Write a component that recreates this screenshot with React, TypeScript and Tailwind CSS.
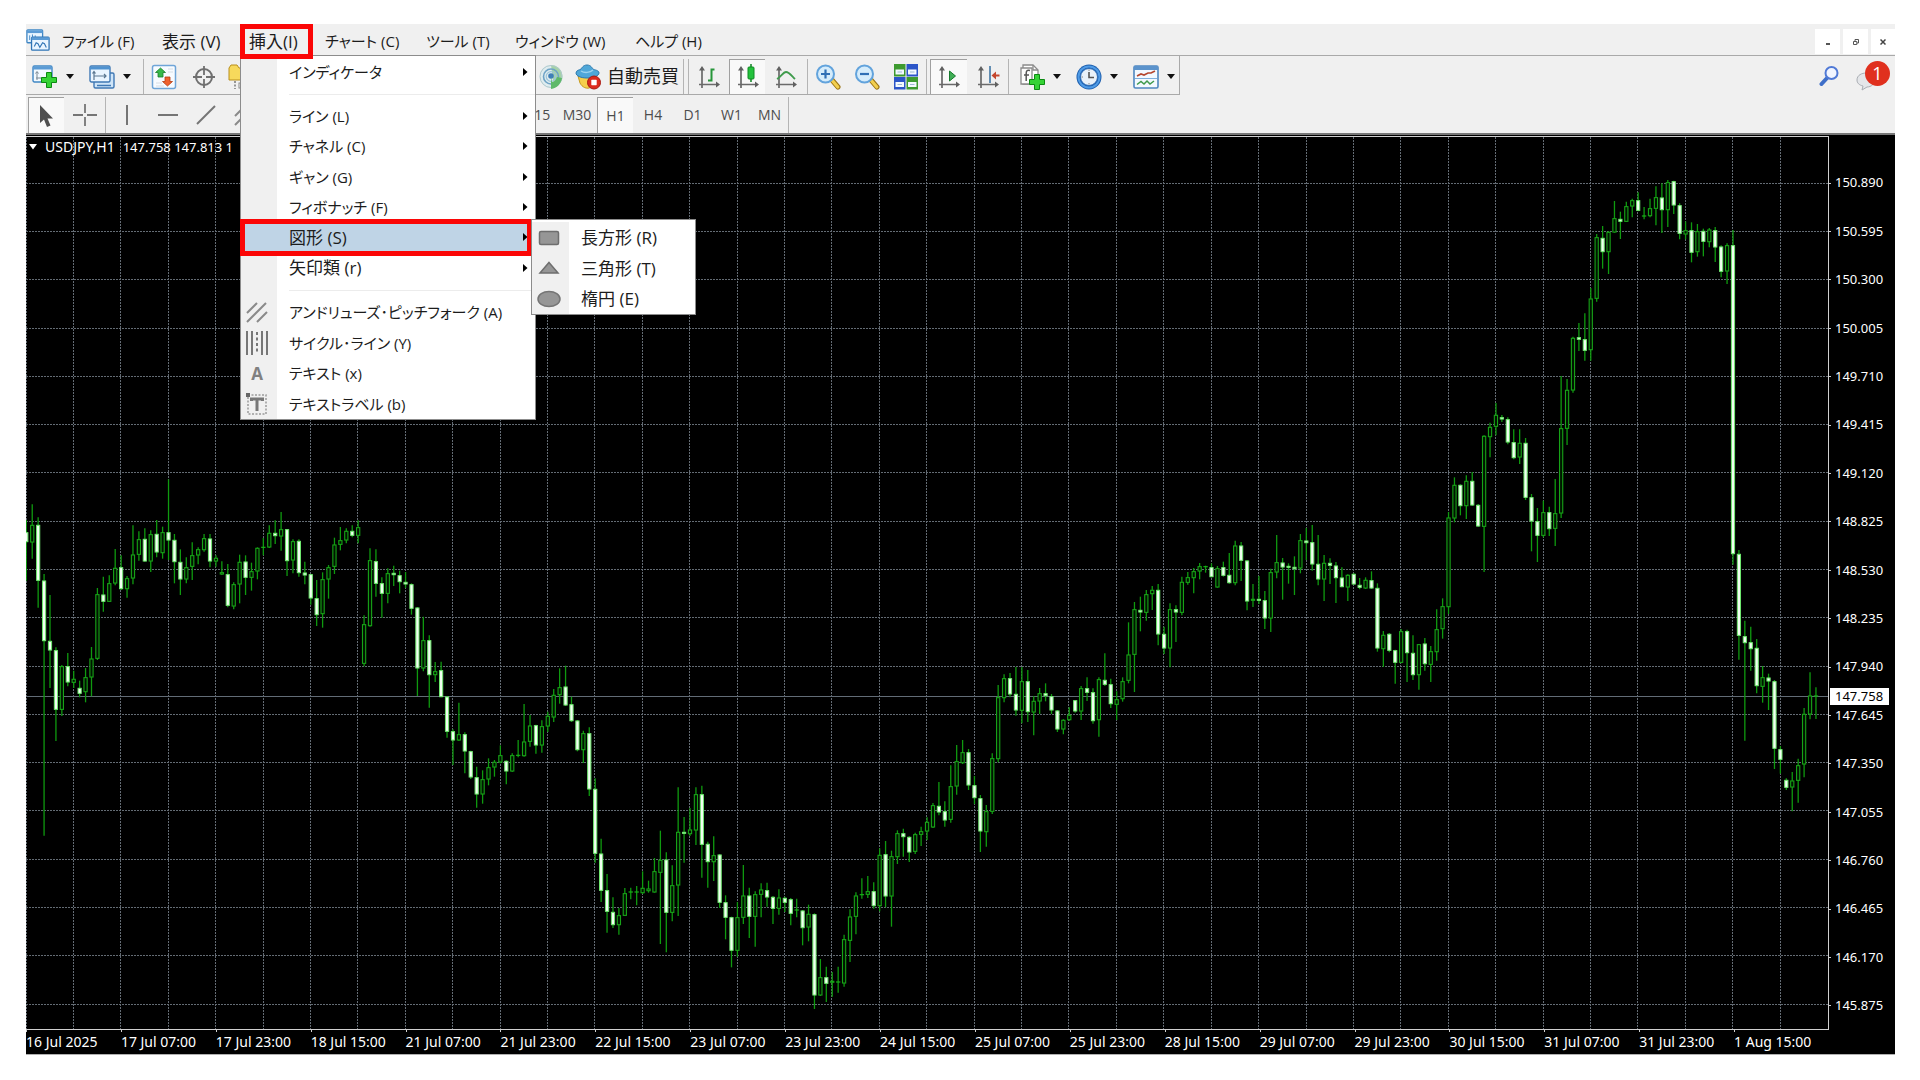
import type { ReactNode } from "react";

/* ---------- chart data ---------- */

// Each bar: direction (u = up, d = down, x = doji), high, body top, body bottom, low.
// Values are thirds of a unit, measured downwards from the base of the session.
const SESSIONS: { base: number; bars: string }[] = [
  {
    base: 460,
    bars: `d 180 217 246 362|u 133 195 247 296|d 172 195 362 443|d 342 362 543 1127|d 405 543 571 684|d 562 571 749 843|u 615 619 749 768|d 579 619 667 679|u 632 657 668 684|d 662 684 701 712|u 624 652 696 727|u 561 596 652 709|u 384 403 596 600|d 350 404 425 455|u 346 370 425 425|u 267 324 370 376|d 286 322 387 390|u 348 355 387 413|u 196 284 355 373|u 214 238 284 302|d 205 237 304 306|u 211 223 304 336|d 180 222 277 292|u 200 217 279 296|d 58 217 241 300|d 222 240 306 370|d 268 306 358 405|u 292 322 358 370|u 247 286 320 360|u 262 268 286 313|u 222 235 270 275|d 222 236 304 322|u 286 294 304 320|u 304 337 343 345|d 312 343 437 442|u 367 373 439 448|u 284 306 373 430|d 286 305 353 405|u 308 334 353 392|u 262 264 334 358|x 234 262 264 286|u 196 219 262 264|d 181 219 228 252|u 156 208 229 272|d 208 208 303 348|u 238 244 301 340|d 238 243 339 350|d 305 338 346 373|d 343 343 415 434|d 360 415 465 498|u 337 358 462 503|u 315 322 358 416|u 233 254 320 342|u 201 241 254 271|u 205 213 241 250|d 196 213 227 232|u 181 202 227 250|u 466 493 611 619|u 265 301 498 500|d 268 304 371 410|d 352 370 401 473|u 325 340 401 430|d 317 339 345 378|d 332 346 366 400|d 336 366 373 384|d 370 373 446 464|d 441 443 625 708`,
  },
  {
    base: 560,
    bars: `u 170 241 325 334|d 226 241 345 443|u 306 334 345 366|d 305 331 411 412|d 408 410 515 533|d 508 514 541 615|u 428 523 541 543|d 517 523 574 640|d 572 574 652 657|d 620 652 703 743|u 631 658 703 731|u 595 622 658 676|u 600 606 622 650|u 556 586 607 610|d 601 603 634 673|u 580 586 634 636|x 540 586 588 592|u 432 545 588 590|u 465 497 545 560|d 494 496 556 581|u 481 499 556 578|u 455 468 499 516|u 387 405 472 486|u 325 382 405 431|d 317 380 436 438|d 410 433 483 486|d 480 482 570 574|u 512 520 570 609|d 502 520 688 708|d 655 687 881 908|d 836 881 992 1026|d 942 991 1055 1118|d 1012 1056 1095 1104|u 1044 1066 1095 1124|u 984 1000 1067 1068|x 983 996 998 1018|x 978 996 998 1036|u 934 984 999 1002|u 962 986 993 998|u 894 934 997 998|u 812 900 938 1152|d 877 899 1058 1177|u 916 976 1058 1084|u 682 816 976 1068|d 771 816 821 908|u 744 809 822 828|u 682 703 811 855|d 677 703 854 953|d 845 852 906 983|u 829 886 906 963|d 882 884 1028 1044|d 1006 1027 1073 1138|d 1070 1072 1172 1222|u 1026 1072 1172 1190|u 915 1007 1073 1092|d 983 1007 1070 1134|u 994 1003 1070 1160|u 970 989 1004 1072|d 968 991 1012 1040|d 1008 1011 1046 1092|u 988 1013 1046 1064|d 1010 1014 1028 1056|d 1014 1018 1061 1096|x 1016 1050 1052 1072|d 1050 1052 1104 1156|u 1034 1062 1102 1144|d 1060 1063 1306 1347`,
  },
  {
    base: 520,
    bars: `u 1317 1372 1426 1428|d 1340 1372 1391 1446|u 1356 1383 1387 1430|x 1340 1386 1388 1418|u 1244 1258 1390 1400|u 1168 1190 1262 1326|u 1117 1127 1190 1243|x 1075 1124 1126 1136|u 1068 1114 1124 1134|d 1087 1114 1158 1166|u 985 1005 1158 1174|d 963 1003 1129 1162|u 992 1009 1129 1220|u 931 940 1011 1032|d 926 940 951 1010|d 949 951 997 1026|u 938 943 995 1002|u 920 934 944 978|u 892 906 934 960|u 849 856 922 924|d 786 858 877 886|d 844 874 901 920|u 736 799 899 908|u 675 724 799 824|u 660 697 729 732|d 687 697 796 810|d 768 796 834 852|d 825 835 934 996|u 855 874 936 980|u 700 715 875 882|u 495 532 717 727|u 463 475 534 547|d 459 475 523 532|d 441 522 571 587|u 441 484 572 610|d 450 484 576 606|u 528 543 577 646|u 504 520 544 582|d 490 520 528 544|d 522 529 571 582|d 570 572 628 636|u 598 600 628 643|u 562 585 600 602|d 540 541 574 578|u 498 505 574 600|d 472 505 518 543|d 505 517 603 611|u 472 478 600 650|d 400 480 494 498|d 476 493 552 564|u 514 538 554 600|u 472 484 537 545|u 307 404 482 490|u 246 268 404 516|d 230 270 277 334|u 210 223 278 302|u 198 210 222 270|d 192 210 343 376|d 320 342 385 402|u 250 268 385 442|d 256 268 277 366|u 170 186 278 286|u 156 172 188 194`,
  },
  {
    base: 400,
    bars: `u 504 514 534 580|u 489 499 514 538|x 497 500 503 518|d 490 502 531 532|u 498 505 562 563|d 485 502 527 530|d 459 525 549 551|u 422 437 549 556|d 426 437 482 543|d 480 482 604 631|u 552 597 602 621|d 528 597 602 612|d 573 601 655 687|u 506 517 655 696|u 405 487 517 535|d 474 488 502 599|d 490 498 503 551|d 469 501 507 585|u 402 421 505 520|d 384 422 429 480|d 375 427 493 512|d 405 492 538 556|u 465 489 538 603|d 475 489 497 552|d 486 497 534 609|d 502 533 561 562|u 523 525 562 603|d 520 522 553 555|d 534 555 563 568|u 532 540 565 567|d 514 541 565 567|d 550 564 745 755|u 693 705 747 801|d 699 702 752 757|d 749 751 788 851|u 687 694 788 790|d 689 694 759 846|d 706 759 825 840|u 732 733 825 869|d 714 731 792 812|u 738 754 794 846|u 628 688 756 782|u 595 619 687 716|u 336 353 621 642|u 232 255 355 367|d 253 255 318 346|u 226 243 318 357|d 216 243 316 318|d 312 315 379 381|u 106 108 380 516|u 68 81 111 172|u 9 45 80 106|d 45 52 58 66|d 52 58 127 133|d 88 127 174 178|u 88 129 172 192|d 114 129 293 300|d 282 292 364 454|d 324 364 407 486|u 302 337 407 412|d 320 337 387 408|u 237 340 386 438`,
  },
  {
    base: 160,
    bars: `u 648 805 1060 1074|u 657 690 806 855|u 530 534 691 698|d 489 532 539 573|d 460 538 572 602|u 384 416 570 602|u 222 232 416 425|d 198 234 276 326|u 214 216 276 342|u 123 175 217 218|d 155 177 185 237|u 125 139 185 186|u 116 121 139 172|d 97 121 152 154|x 141 168 170 178|u 116 145 168 172|u 79 112 146 196|d 70 113 150 219|u 60 67 150 201|d 62 64 136 162|d 130 136 221 238|u 184 211 223 238|d 187 211 278 307|u 192 214 276 290|d 206 213 245 289|u 204 209 246 262|d 201 211 262 306|d 256 260 335 352|u 250 256 334 372|d 210 256 1182 1214|d 1170 1182 1427 1499`,
  },
  {
    base: 600,
    bars: `d 62 109 129 422|d 80 127 147 212|d 117 144 258 280|u 198 232 260 308|d 221 233 244 330|d 240 244 446 507|d 438 448 479 521|d 535 540 563 570|u 516 542 562 634|u 476 496 542 608|u 324 342 493 532|u 217 287 343 358|x 262 288 290 357`,
  },
];

const BAR_STEP = 5.926;
const BARS = SESSIONS.flatMap((s) =>
  s.bars.split("|").map((line) => {
    const [kind, ...v] = line.split(" ");
    const [high, top, bottom, low] = v.map((n) => s.base + Number(n) / 3);
    return { kind, high, top, bottom, low };
  }),
).map((b, i) => ({ ...b, x: 26.3 + BAR_STEP * i }));

const GRID_X = Array.from({ length: 38 }, (_, i) => 26 + BAR_STEP * 8 * i);
const GRID_Y = Array.from({ length: 18 }, (_, i) => 183.2 + 48.29 * i);

const PRICES = [
  "150.890", "150.595", "150.300", "150.005", "149.710", "149.415", "149.120", "148.825", "148.530",
  "148.235", "147.940", "147.645", "147.350", "147.055", "146.760", "146.465", "146.170", "145.875",
];

const DATES = [
  "16 Jul 2025", "17 Jul 07:00", "17 Jul 23:00", "18 Jul 15:00", "21 Jul 07:00", "21 Jul 23:00", "22 Jul 15:00",
  "23 Jul 07:00", "23 Jul 23:00", "24 Jul 15:00", "25 Jul 07:00", "25 Jul 23:00", "28 Jul 15:00", "29 Jul 07:00",
  "29 Jul 23:00", "30 Jul 15:00", "31 Jul 07:00", "31 Jul 23:00", "1 Aug 15:00",
];

function CandleChart() {
  return (
    <svg className="block h-full w-full" viewBox="26 137 1802 892" preserveAspectRatio="none" role="img" aria-label="USDJPY,H1">
      <g stroke="#646c74" strokeWidth="1" strokeDasharray="2 1">
        {GRID_X.map((x) => (
          <line key={x} x1={Math.floor(x) + 0.5} x2={Math.floor(x) + 0.5} y1="137" y2="1029" />
        ))}
        {GRID_Y.map((y) => (
          <line key={y} x1="26" x2="1828" y1={Math.floor(y) + 0.5} y2={Math.floor(y) + 0.5} />
        ))}
      </g>
      <line x1="26" x2="1828" y1="696.5" y2="696.5" stroke="#626c76" />
      {BARS.map((b, i) => (
        <g key={i}>
          <line x1={b.x} x2={b.x} y1={b.high} y2={b.low} stroke="#0f9a0f" strokeWidth="1.3" />
          {b.kind === "x" ? (
            <line x1={b.x - 2.2} x2={b.x + 2.2} y1={b.top} y2={b.top} stroke="#16b016" strokeWidth="1.2" />
          ) : b.kind === "u" ? (
            <rect x={b.x - 1.6} y={b.top + 0.3} width="3.2" height={Math.max(1, b.bottom - b.top - 0.6)} fill="#001500" stroke="#17a317" strokeWidth="1.1" />
          ) : (
            <rect x={b.x - 1.6} y={b.top + 0.3} width="3.2" height={Math.max(1, b.bottom - b.top - 0.6)} fill="#f2fff2" stroke="#6fe86f" strokeWidth="1" />
          )}
        </g>
      ))}
    </svg>
  );
}

/* ---------- icons ---------- */

function Icon({ children, className = "h-[26px] w-[26px]" }: { children: ReactNode; className?: string }) {
  return (
    <svg className={`${className} shrink-0`} viewBox="0 0 26 26" fill="none" aria-hidden="true">
      {children}
    </svg>
  );
}

const Plus = ({ x, y }: { x: number; y: number }) => (
  <path
    transform={`translate(${x} ${y})`}
    d="M5 0h5v5h5v5h-5v5H5v-5H0V5h5z"
    fill="#35d335"
    stroke="#0c8a12"
    strokeWidth="1"
  />
);

const LogoIcon = () => (
  <Icon className="h-6 w-6">
    <rect x="1" y="2" width="17" height="14" rx="1" fill="#e9f5ff" stroke="#3f86c4" strokeWidth="1.4" />
    <path d="M1 4h17" stroke="#5b9bd5" strokeWidth="3" />
    <path d="M4 8v5M7 7v4M10 8v3" stroke="#3f86c4" />
    <rect x="6" y="10" width="19" height="14" rx="1" fill="#e9f5ff" stroke="#2f74b5" strokeWidth="1.4" />
    <path d="M6 11.5h19" stroke="#5b9bd5" strokeWidth="3" />
    <path d="M9 20l2-4 2 1 2 4 3-5 2 1 2 4" stroke="#2f74b5" strokeWidth="1.2" />
  </Icon>
);

const NewChartIcon = () => (
  <Icon>
    <rect x="1" y="2" width="19" height="16" rx="1.5" fill="#f2f9ff" stroke="#3f86c4" strokeWidth="1.4" />
    <path d="M1 4h19" stroke="#5b9bd5" strokeWidth="3" />
    <path d="M5 8v8M3.5 9.5L5 7.5l1.5 2M4 14h9" stroke="#7b8894" />
    <Plus x={9.5} y={8.5} />
  </Icon>
);

const ProfilesIcon = () => (
  <Icon>
    <rect x="5" y="9" width="20" height="15" rx="1.5" fill="#cfe5f8" stroke="#3f78b4" strokeWidth="1.4" />
    <path d="M8 21.5h14" stroke="#3f78b4" strokeWidth="1.5" />
    <rect x="1" y="2" width="20" height="16" rx="1.5" fill="#eaf5ff" stroke="#3f78b4" strokeWidth="1.4" />
    <path d="M1 4h20" stroke="#4f92d0" strokeWidth="3" />
    <path d="M5 8v8M3.5 9.5L5 7.5l1.5 2M5 12h12M15 10l2 2-2 2" stroke="#5a7690" strokeWidth="1.2" />
  </Icon>
);

const MarketWatchIcon = () => (
  <Icon>
    <rect x="1.5" y="1.5" width="23" height="23" rx="2" fill="#f7fbff" stroke="#6fa5d8" strokeWidth="1.5" />
    <path d="M5 19h6M5 22h8M17 5h5M17 8h5" stroke="#d6dde5" />
    <path d="M9.500 4l5 4.500h-2.500v4.500H7V8.500H4.500z" fill="#37b84a" stroke="#1b7e2b" strokeWidth=".8" />
    <path d="M16.500 22l5-4.500H19V13h-5v4.500h-2.500z" fill="#f0612e" stroke="#b53c12" strokeWidth=".8" />
  </Icon>
);

const TargetIcon = () => (
  <Icon>
    <circle cx="13" cy="13" r="8" stroke="#6f6f6f" strokeWidth="2" />
    <path d="M13 2v9M13 15v9M2 13h9M15 13h9" stroke="#6f6f6f" strokeWidth="1.8" />
  </Icon>
);

const NavigatorIcon = () => (
  <Icon>
    <path d="M1 4l2-3h6l2 3h12v12H1z" fill="#f7d95c" stroke="#b98f1c" />
    <path d="M7 17v8" stroke="#777" strokeDasharray="2 1.5" strokeWidth="1.5" />
    <rect x="11" y="19" width="8" height="5" fill="#fff" stroke="#888" />
  </Icon>
);

const SignalIcon = () => (
  <Icon>
    <circle cx="13" cy="12.5" r="11.500" fill="#dfecef" />
    <path d="M13 1a11.500 11.500 0 0 1 3 22.600z" fill="#a5d3a8" />
    <circle cx="13" cy="12.5" r="11" stroke="#b0c8cc" />
    <circle cx="13" cy="12.5" r="7.500" stroke="#6ea3c6" strokeWidth="1.6" />
    <circle cx="13" cy="12.5" r="4.800" stroke="#9cc4da" strokeWidth="1.2" />
    <circle cx="13" cy="12" r="2.800" fill="#3f7fb8" />
    <path d="M13 13v12c6-1 10-5 11-11l-5-1c-1 3-3 5-5 5z" fill="#5fb96a" />
  </Icon>
);

const AutoTradeIcon = () => (
  <Icon>
    <path d="M3 12l18-2-5 13c-4 3-9 0-11-4z" fill="#f6cf4b" stroke="#c79a1e" />
    <path d="M1 9c0-3 4-3 5-4s2-4 6-4 5 3 6 4 6 1 6 4-6 5-12 5S1 12 1 9z" fill="#4fa7d8" stroke="#2d79ad" />
    <path d="M6 7c3 2 9 2 12-1" stroke="#9cd3ee" strokeWidth="1.5" />
    <circle cx="19" cy="18.5" r="6.5" fill="#dd2a1d" stroke="#a81910" />
    <rect x="16.3" y="15.8" width="5.4" height="5.4" rx=".6" fill="#fff" />
  </Icon>
);

const Axes = () => (
  <>
    <path d="M6 4v20M3 20.500h19" stroke="#6a6a6a" strokeWidth="1.700" />
    <path d="M3 6.500L6 2l3 4.500zM20 17.500l4 3-4 3z" fill="#606060" />
  </>
);

const BarChartIcon = () => (
  <Icon>
    <Axes />
    <path d="M15.5 4.500v13M15 5.500h3.500M12 16.500h3.500" stroke="#27963a" strokeWidth="2" />
  </Icon>
);

const CandleIcon = () => (
  <Icon>
    <Axes />
    <path d="M16 0v18" stroke="#1b8a2d" strokeWidth="1.600" />
    <rect x="13" y="3" width="6" height="12" rx="1" fill="#23c23c" stroke="#0f8a22" />
  </Icon>
);

const LineChartIcon = () => (
  <Icon>
    <Axes />
    <path d="M4 15c4-2 6-7 9-7s5 3 9 7" stroke="#3f9b4c" strokeWidth="1.800" />
  </Icon>
);

const Magnifier = ({ plus }: { plus?: boolean }) => (
  <Icon>
    <path d="M17 16l6 7" stroke="#9b7414" strokeWidth="5" strokeLinecap="round" />
    <path d="M17.3 16.500l5.500 6.500" stroke="#f2cf4f" strokeWidth="3.200" strokeLinecap="round" />
    <circle cx="10.500" cy="10" r="8.500" fill="#d5ecfb" stroke="#62a3dc" strokeWidth="2" />
    <path d={plus ? "M6 10h9M10.5 5.500v9" : "M6 10h9"} stroke="#2f6fb5" strokeWidth="2.200" />
  </Icon>
);

const TileIcon = () => (
  <Icon>
    <rect x="1" y="0" width="11.500" height="12.500" fill="#3d9a2f" />
    <rect x="13.500" y="0" width="11.500" height="12.500" fill="#2b55c8" />
    <rect x="1" y="13" width="11.500" height="12.500" fill="#2b55c8" />
    <rect x="13.500" y="13" width="11.500" height="12.500" fill="#3d9a2f" />
    <path d="M2.500 5.500H11v5H2.500zM15 5.500h8.500v5H15zM2.500 18H11v5H2.500zM15 18h8.500v5H15z" fill="#f4faff" />
    <path d="M4.500 8H9M17 8h4.500M4.500 20.500H9M17 20.500h4.500" stroke="#9fb8d4" />
  </Icon>
);

const AutoScrollIcon = () => (
  <Icon>
    <Axes />
    <path d="M13.500 7l6 5-6 5z" fill="#3fae55" stroke="#167a2d" />
  </Icon>
);

const ShiftIcon = () => (
  <Icon>
    <Axes />
    <path d="M15 2v17" stroke="#4a7da8" strokeWidth="1.700" />
    <path d="M24.500 11.500h-6" stroke="#c4462e" strokeWidth="2" />
    <path d="M21 7.500L16.500 11.500l4.500 4z" fill="#c4462e" />
  </Icon>
);

const IndicatorsIcon = () => (
  <Icon>
    <path d="M4 1h10l5 5v14H4z" fill="#fff" stroke="#8a8a8a" strokeWidth="1.300" />
    <path d="M2 4h11v16H2z" fill="#fcfcfc" stroke="#8a8a8a" strokeWidth="1.300" />
    <path d="M14 1v5h5" stroke="#8a8a8a" strokeWidth="1.300" />
    <path d="M11 6.500c-3-1-3.800.5-3.800 3V17M5 11h5" stroke="#555" strokeWidth="1.500" />
    <Plus x={10.500} y={10.500} />
  </Icon>
);

const ClockIcon = () => (
  <Icon>
    <circle cx="13" cy="13" r="12.500" fill="#1d5fae" />
    <circle cx="13" cy="13" r="10.500" stroke="#4f9be6" strokeWidth="2" />
    <circle cx="13" cy="13" r="8.500" fill="#e9f1f9" stroke="#2c6cb8" />
    <path d="M13 8v5.500h5" stroke="#555" strokeWidth="1.600" />
    <path d="M13 5.500V7M13 19v1.500M5.500 13H7" stroke="#888" />
  </Icon>
);

const TemplateIcon = () => (
  <Icon>
    <rect x="1" y="2" width="24" height="22" rx="1.500" fill="#f3f9ff" stroke="#4f87c0" strokeWidth="1.600" />
    <path d="M1 4h24" stroke="#5b93cc" strokeWidth="4" />
    <path d="M4 12l4-2 3 1 4-2h3l4-2" stroke="#b5472f" strokeWidth="1.700" />
    <path d="M2 14.500h22" stroke="#7fb0dd" />
    <path d="M4 20.500l4-3 3 2.500 3-3 3 3 4-3" stroke="#3f9a4d" strokeWidth="1.500" />
  </Icon>
);

const CursorIcon = () => (
  <Icon>
    <path d="M6 2v18l4-3.500 3 7.500 3.500-1.500-3-7h5.500z" fill="#4f4f4f" />
  </Icon>
);

const CrossIcon = () => (
  <Icon>
    <path d="M13 2v9M13 15v9M1 13h10M15 13h10" stroke="#757575" strokeWidth="1.800" />
  </Icon>
);

const LineIcon = ({ d }: { d: string }) => (
  <Icon>
    <path d={d} stroke="#757575" strokeWidth="2" />
  </Icon>
);

const PitchforkIcon = () => (
  <Icon>
    <path d="M3 14L13 4M3 23L22 4M13 23l10-10" stroke="#8a8a8a" strokeWidth="2" />
  </Icon>
);

const CycleIcon = () => (
  <Icon>
    <path d="M3 1v24M8 1v24M18 1v24M23 1v24" stroke="#777" strokeWidth="2" />
    <path d="M13 2v22" stroke="#777" strokeWidth="2" strokeDasharray="3 2.500" />
  </Icon>
);

const TextLabelIcon = () => (
  <Icon>
    <rect x="4" y="4" width="18" height="19" stroke="#9a9a9a" strokeWidth="1.500" strokeDasharray="2 1.500" />
    <rect x="2" y="2" width="4" height="4" fill="#666" />
    <path d="M7.500 10V8h11v2M13 8v12" stroke="#777" strokeWidth="3" />
  </Icon>
);

const RectShape = () => (
  <Icon>
    <rect x="3.500" y="6.500" width="19" height="13" rx="1.500" fill="#969696" stroke="#6e6e6e" strokeWidth="1.500" />
  </Icon>
);

const TriangleShape = () => (
  <Icon>
    <path d="M13 7.500L22 18H4z" fill="#969696" stroke="#6e6e6e" strokeWidth="1.500" />
  </Icon>
);

const EllipseShape = () => (
  <Icon>
    <ellipse cx="13" cy="13" rx="11" ry="7.500" fill="#969696" stroke="#757575" strokeWidth="1.500" />
  </Icon>
);

const Caret = () => (
  <svg className="h-1.5 w-2 shrink-0" viewBox="0 0 8 6" aria-hidden="true">
    <path d="M0 0h8L4 5z" fill="#111" />
  </svg>
);

/* ---------- menu bar ---------- */

type Entry = { label: string; icon?: ReactNode; sub?: boolean; active?: boolean; size?: string };

const GROUPS: { items: Entry[]; rows: string }[] = [
  { rows: "h-[30px]", items: [{ label: "インディケータ", sub: true }] },
  {
    rows: "h-[182px]",
    items: [
      { label: "ライン (L)", sub: true },
      { label: "チャネル (C)", sub: true },
      { label: "ギャン (G)", sub: true },
      { label: "フィボナッチ (F)", sub: true },
      { label: "図形 (S)", sub: true, active: true, size: "text-[17px]" },
      { label: "矢印類 (r)", sub: true, size: "text-[17px]" },
    ],
  },
  {
    rows: "h-[122px]",
    items: [
      { label: "アンドリューズ･ピッチフォーク (A)", icon: <PitchforkIcon /> },
      { label: "サイクル･ライン (Y)", icon: <CycleIcon /> },
      { label: "テキスト (x)", icon: <span className="text-[17px] font-bold text-[#808080]">A</span> },
      { label: "テキストラベル (b)", icon: <TextLabelIcon /> },
    ],
  },
];

const SHAPES: Entry[] = [
  { label: "長方形 (R)", icon: <RectShape /> },
  { label: "三角形 (T)", icon: <TriangleShape /> },
  { label: "楕円 (E)", icon: <EllipseShape /> },
];

function ShapesMenu() {
  return (
    <div role="menu" className="absolute -top-[3px] left-[290px] z-10 grid h-24 w-[165px] auto-rows-fr border border-[#8c8c8c] bg-white pt-0.5 text-[17px]">
      {SHAPES.map((s) => (
        <button key={s.label} type="button" role="menuitem" className="flex items-stretch text-left">
          <span className="flex w-[37px] items-center justify-center bg-[#f0f0f0] pr-1">{s.icon}</span>
          <span className="self-center pl-3 whitespace-nowrap">{s.label}</span>
        </button>
      ))}
    </div>
  );
}

function MenuRow({ item }: { item: Entry }) {
  return (
    <div className="relative">
      <button
        type="button"
        role="menuitem"
        className={`flex h-full w-full items-center text-left ${item.size ?? "text-[15px]"} ${item.active ? "bg-[#bfd4e6]" : ""}`}
      >
        <span className="flex w-9 shrink-0 justify-center pr-1">{item.icon}</span>
        <span className="grow pl-3 whitespace-nowrap">{item.label}</span>
        {item.sub && (
          <svg className="mr-[7px] h-2 w-[5px] shrink-0" viewBox="0 0 5 8" aria-hidden="true">
            <path d="M0 0v8l4.500-4z" fill="#000" />
          </svg>
        )}
      </button>
      {item.active && (
        <>
          <span className="pointer-events-none absolute -inset-y-[3px] right-[3px] -left-px border-[5px] border-[#fb0606]" />
          <ShapesMenu />
        </>
      )}
    </div>
  );
}

function InsertMenu() {
  return (
    <div
      role="menu"
      className="absolute top-[31px] left-0 z-20 w-[296px] border border-[#8c8c8c] bg-[linear-gradient(to_right,#f0f0f0_36px,#ffffff_36px)] pt-px"
    >
      {GROUPS.map((g, i) => (
        <div key={g.rows}>
          {i > 0 && (
            <div className="flex h-3.5 items-center pl-12">
              <div className="h-px w-full bg-[#ececec]" />
            </div>
          )}
          <div className={`grid auto-rows-fr ${g.rows}`}>
            {g.items.map((item) => (
              <MenuRow key={item.label} item={item} />
            ))}
          </div>
        </div>
      ))}
    </div>
  );
}

const MENUS = [
  { label: "ファイル (F)", width: "w-[100px]", size: "text-[15px]" },
  { label: "表示 (V)", width: "w-[90px]", size: "text-[17px]" },
  { label: "挿入(I)", width: "w-[73px]", size: "text-[17px]", open: true },
  { label: "チャート (C)", width: "w-[101px]", size: "text-[15px]" },
  { label: "ツール (T)", width: "w-[89px]", size: "text-[15px]" },
  { label: "ウィンドウ (W)", width: "w-[120px]", size: "text-[15px]" },
  { label: "ヘルプ (H)", width: "w-[100px]", size: "text-[15px]" },
];

function MenuBar() {
  return (
    <header className="flex h-8 items-stretch border-b border-[#a9a9a9]">
      <div className="flex w-6 items-center">
        <LogoIcon />
      </div>
      <nav className="flex">
        {MENUS.map((m) => (
          <div key={m.label} className={`relative ${m.width}`}>
            <button
              type="button"
              className={`flex h-full w-full items-center pt-1 whitespace-nowrap ${m.size} ${m.open ? "pl-[9px]" : "pl-3"}`}
            >
              {m.label}
            </button>
            {m.open && (
              <>
                <InsertMenu />
                <span className="pointer-events-none absolute top-0 left-0 z-30 h-[35px] w-full border-[5px] border-[#fb0606]" />
              </>
            )}
          </div>
        ))}
      </nav>
      <div className="ml-auto flex items-end gap-[3px] pb-px">
        <button type="button" aria-label="最小化" className="flex h-[25px] w-[25px] items-center justify-center bg-white">
          <span className="mt-1 h-0.5 w-1 bg-[#555]" />
        </button>
        <button type="button" aria-label="元に戻す" className="flex h-[25px] w-[25px] items-center justify-center bg-white">
          <svg className="h-1.5 w-1.5" viewBox="0 0 6 6" fill="none" stroke="#555" aria-hidden="true">
            <path d="M2 2V.5h3.500V4H4M.5 2.500h3.300v3H.5z" />
          </svg>
        </button>
        <button type="button" aria-label="閉じる" className="flex h-[25px] w-6 items-center justify-center bg-white">
          <svg className="h-1.5 w-1.5" viewBox="0 0 6 6" stroke="#444" strokeWidth="1.500" aria-hidden="true">
            <path d="M.5.5l5 5M5.500.5l-5 5" />
          </svg>
        </button>
      </div>
    </header>
  );
}

/* ---------- toolbars ---------- */

const Sep = ({ className = "" }: { className?: string }) => (
  <span className={`w-px shrink-0 self-stretch bg-[#b4b4b4] ${className}`} />
);

function Tool({ label, width, active, children }: { label: string; width: string; active?: boolean; children: ReactNode }) {
  return (
    <button
      type="button"
      aria-label={label}
      className={`flex shrink-0 items-center justify-center self-stretch ${width} ${
        active ? "border-t border-l border-[#a0a0a0] bg-[#f9f9f9]" : ""
      }`}
    >
      {children}
    </button>
  );
}

function DropTool({ label, width, children }: { label: string; width: string; children: ReactNode }) {
  return (
    <button type="button" aria-label={label} className={`flex shrink-0 items-center gap-2 self-stretch pl-1.5 ${width}`}>
      {children}
      <Caret />
    </button>
  );
}

function MainToolbar() {
  return (
    <div className="flex h-[39px]">
      <div className="flex shrink-0 items-center border-r border-b border-[#a9a9a9] pt-[3px]">
        <DropTool label="新規チャート" width="w-[57px]"><NewChartIcon /></DropTool>
        <DropTool label="チャートの組表示" width="w-[60px]"><ProfilesIcon /></DropTool>
        <Sep />
        <Tool label="気配値表示" width="w-10"><MarketWatchIcon /></Tool>
        <Tool label="データウィンドウ" width="w-[39px]"><TargetIcon /></Tool>
        <Tool label="ナビゲーター" width="w-9"><NavigatorIcon /></Tool>
        <span className="w-[274px] shrink-0" />
        <Tool label="シグナル" width="w-9"><SignalIcon /></Tool>
        <button type="button" className="flex w-[114px] shrink-0 items-center gap-1.5 pl-1.5 text-[18px] whitespace-nowrap">
          <AutoTradeIcon />
          自動売買
        </button>
        <Sep />
        <Sep className="ml-1" />
        <Tool label="バーチャート" width="w-10"><BarChartIcon /></Tool>
        <Tool label="ローソク足" width="w-9" active><CandleIcon /></Tool>
        <Tool label="ラインチャート" width="w-[42px]"><LineChartIcon /></Tool>
        <Sep />
        <Tool label="拡大" width="w-[39px]"><Magnifier plus /></Tool>
        <Tool label="縮小" width="w-[39px]"><Magnifier /></Tool>
        <Tool label="整列" width="w-[39px]"><TileIcon /></Tool>
        <Sep className="mr-[3px] ml-px" />
        <Tool label="自動スクロール" width="w-[37px]" active><AutoScrollIcon /></Tool>
        <Tool label="チャートシフト" width="w-[41px]"><ShiftIcon /></Tool>
        <Sep />
        <span className="w-1" />
        <DropTool label="インディケータ" width="w-[57px]"><IndicatorsIcon /></DropTool>
        <DropTool label="時間足設定" width="w-[57px]"><ClockIcon /></DropTool>
        <DropTool label="定型チャート" width="w-[52px]"><TemplateIcon /></DropTool>
      </div>
      <div className="ml-auto flex items-center gap-[17px] pr-[5px]">
        <button type="button" aria-label="検索">
          <svg className="h-5 w-5" viewBox="0 0 20 20" fill="none" aria-hidden="true">
            <path d="M9 11l-6.500 7" stroke="#3f6fc9" strokeWidth="4" strokeLinecap="round" />
            <circle cx="12.500" cy="7" r="6" fill="#f1f5ff" stroke="#5079d6" strokeWidth="2" />
          </svg>
        </button>
        <button type="button" className="relative flex h-[30px] w-[34px] items-end">
          <svg className="h-5 w-5" viewBox="0 0 20 20" aria-hidden="true">
            <path d="M1 9c0-5 5-7 9-7s9 3 9 7-4 7-8 7l-5 3 1-4c-4-1-6-3-6-6z" fill="#e4e6e9" stroke="#a9adb3" />
          </svg>
          <span className="absolute top-0 right-0 flex h-[25px] w-[25px] items-center justify-center rounded-full bg-[#e0301e] text-[18px] leading-none text-white">
            1
          </span>
        </button>
      </div>
    </div>
  );
}

const FRAMES = [
  { label: "M15", width: "w-[42px]" },
  { label: "M30", width: "w-10" },
  { label: "H1", width: "w-9", active: true },
  { label: "H4", width: "w-10" },
  { label: "D1", width: "w-[39px]" },
  { label: "W1", width: "w-[39px]" },
  { label: "MN", width: "w-[37px]" },
];

function LineToolbar() {
  return (
    <div className="flex h-[38px] pt-0.5 text-sm text-[#4c4c4c]">
      <div className="flex items-center border-r border-[#b4b4b4] pl-0.5">
        <Tool label="カーソル" width="w-9" active><CursorIcon /></Tool>
        <Tool label="クロスヘア" width="w-[41px]"><CrossIcon /></Tool>
        <Sep />
        <Tool label="垂直線" width="w-[42px]"><LineIcon d="M13 3v20" /></Tool>
        <Tool label="水平線" width="w-10"><LineIcon d="M3 13h20" /></Tool>
        <Tool label="トレンドライン" width="w-9"><LineIcon d="M4 22L22 4" /></Tool>
        <Tool label="平行チャネル" width="w-[42px]"><PitchforkIcon /></Tool>
        <span className="w-[249px] shrink-0" />
        {FRAMES.map((f) => (
          <Tool key={f.label} label={f.label} width={f.width} active={f.active}>
            {f.label}
          </Tool>
        ))}
      </div>
    </div>
  );
}

/* ---------- page ---------- */

function ChartPanel() {
  return (
    <main className="flex grow flex-col border-t-2 border-b border-t-[#777] border-b-[#b0b0b0] bg-black pt-px font-['Noto_Sans',sans-serif] text-white">
      <div className="flex grow">
        <section className="relative min-w-0 grow border-t border-r border-b border-[#d0d0d0]">
          <div className="absolute inset-0">
            <CandleChart />
          </div>
          <h1 className="absolute top-0.5 left-[3px] flex items-center gap-2 text-sm leading-4 whitespace-pre">
            <svg className="h-1.5 w-2" viewBox="0 0 8 6" aria-hidden="true">
              <path d="M0 0h8L4 5.500z" fill="#fff" />
            </svg>
            USDJPY,H1
            <span className="text-[13px]">147.758 147.813 1</span>
          </h1>
        </section>
        <aside className="relative flex w-[66px] shrink-0 flex-col pt-[23px] text-[13px]">
          {PRICES.map((p) => (
            <div key={p} className="flex flex-1 items-center gap-1">
              <span className="h-px w-0.5 bg-[#d0d0d0]" />
              {p}
            </div>
          ))}
          <div className="absolute top-[552px] left-px flex h-[17px] w-[59px] items-center bg-white pl-[5px] text-black">147.758</div>
        </aside>
      </div>
      <div className="mr-[66px] grid h-6 grid-cols-[repeat(19,minmax(0,1fr))] text-sm leading-6">
        {DATES.map((d) => (
          <div key={d} className="flex whitespace-nowrap">
            <span className="-mr-px h-0.5 w-px shrink-0 bg-[#d0d0d0]" />
            {d}
          </div>
        ))}
      </div>
    </main>
  );
}

export default function App() {
  return (
    <div className="flex min-h-screen flex-col bg-white pt-6 pr-[25px] pb-[25px] pl-[26px] font-['Open_Sans','Noto_Sans_CJK_JP',sans-serif] text-[#1c1c1c] [font-feature-settings:'palt']">
      <div className="flex grow flex-col bg-[#f0f0f0]">
        <MenuBar />
        <MainToolbar />
        <LineToolbar />
        <ChartPanel />
      </div>
    </div>
  );
}
